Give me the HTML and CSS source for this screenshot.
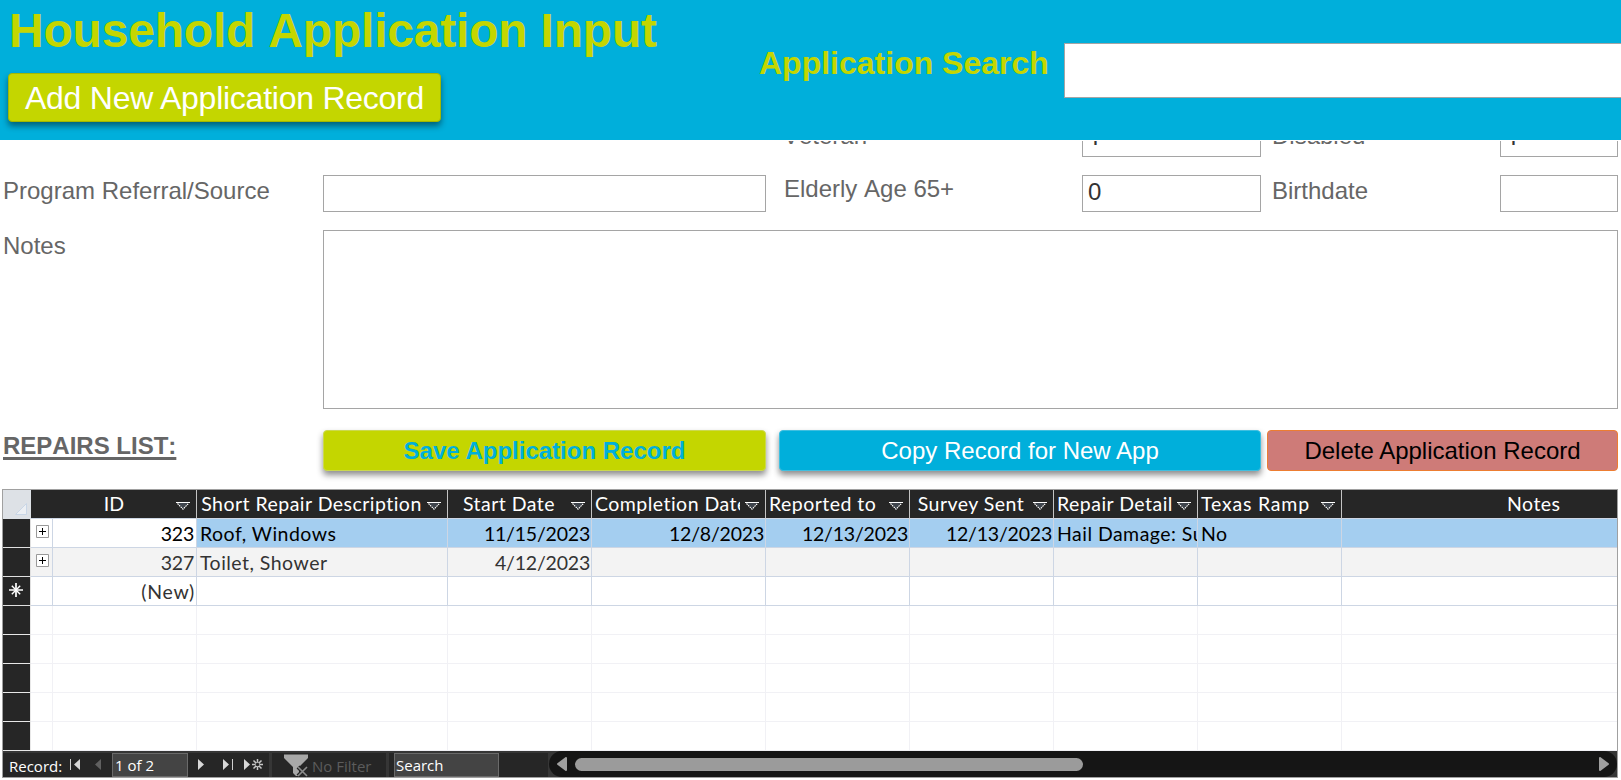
FILE: index.html
```html
<!DOCTYPE html>
<html lang="en">
<head>
<meta charset="utf-8">
<title>Household Application Input</title>
<link rel="stylesheet" href="styles.css">
</head>
<body>
<svg class="defs" width="0" height="0">
  <symbol id="drop" viewBox="0 0 14 8"><path d="M2 1L7 7L12 1Z" fill="#3f454d"/><path d="M0 .5H14" stroke="#fff"/><path d="M1.5 1.5L7 7.2L12.5 1.5" fill="none" stroke="#fff" stroke-width="1.1" stroke-dasharray="1.6 .7"/></symbol>
  <symbol id="plus" viewBox="0 0 13 13"><path d="M.5 .5H12.5V12.5H.5Z" fill="#fff" stroke="#999"/><path d="M3 6.5H10M6.5 3V10" stroke="#000"/></symbol>
</svg>
<header class="banner">
  <div class="banner-left">
    <h1>Household Application Input</h1>
    <button class="btn add"><span>Add New Application Record</span></button>
  </div>
  <div class="search-label">Application Search</div>
  <div class="search-box"></div>
</header>
<main>
  <section class="form">
    <div class="row">
      <span></span><span></span>
      <label class="mid">Veteran</label><div class="field flag">1</div>
      <label class="far">Disabled</label><div class="field flag">1</div>
    </div>
    <div class="row">
      <label>Program Referral/Source</label><div class="field"></div>
      <label class="mid raised">Elderly Age 65+</label><div class="field">0</div>
      <label class="far">Birthdate</label><div class="field"></div>
    </div>
    <div class="row notes">
      <label>Notes</label><div class="field wide"></div>
    </div>
  </section>
  <section class="actions">
    <h2>REPAIRS LIST:</h2>
    <button class="btn save"><span>Save Application Record</span></button>
    <button class="btn copy"><span>Copy Record for New App</span></button>
    <button class="btn delete"><span>Delete Application Record</span></button>
  </section>
  <section class="sheet">
    <div class="grid head">
      <div class="corner"><svg width="12" height="12" viewBox="0 0 12 12"><path d="M11.5 .5V11.5H.5Z" fill="#eceff3" stroke="#c9d6e6"/></svg></div>
      <div></div>
      <div><span class="tight">ID</span><svg><use href="#drop"/></svg></div>
      <div><span>Short Repair Description</span><svg><use href="#drop"/></svg></div>
      <div><span>Start Date</span><svg><use href="#drop"/></svg></div>
      <div><span>Completion Date</span><svg><use href="#drop"/></svg></div>
      <div><span class="left">Reported to</span><svg><use href="#drop"/></svg></div>
      <div><span>Survey Sent</span><svg><use href="#drop"/></svg></div>
      <div><span>Repair Details</span><svg><use href="#drop"/></svg></div>
      <div><span class="left loose">Texas Ramp</span><svg><use href="#drop"/></svg></div>
      <div class="last"><span>Notes</span></div>
    </div>
    <div class="grid data current">
      <div class="sel"></div><div class="exp"><svg><use href="#plus"/></svg></div>
      <div class="num id">323</div><div>Roof, Windows</div><div class="num">11/15/2023</div><div class="num">12/8/2023</div><div class="num">12/13/2023</div><div class="num">12/13/2023</div><div>Hail Damage: Su</div><div>No</div><div></div>
    </div>
    <div class="grid data alt">
      <div class="sel"></div><div class="exp"><svg><use href="#plus"/></svg></div>
      <div class="num id">327</div><div>Toilet, Shower</div><div class="num">4/12/2023</div><div></div><div></div><div></div><div></div><div></div><div></div>
    </div>
    <div class="grid data">
      <div class="sel"><svg width="14" height="14" viewBox="0 0 14 14"><path d="M7 0V14M0 7H14" stroke="#fff" stroke-width="1.7"/><path d="M2.8 2.8L11.2 11.2M11.2 2.8L2.8 11.2" stroke="#fff" stroke-width="1.4"/></svg></div><div></div>
      <div class="num new">(New)</div><div></div><div></div><div></div><div></div><div></div><div></div><div></div><div></div>
    </div>
    <div class="grid data empty"><div class="sel"></div><div></div><div></div><div></div><div></div><div></div><div></div><div></div><div></div><div></div><div></div></div>
    <div class="grid data empty"><div class="sel"></div><div></div><div></div><div></div><div></div><div></div><div></div><div></div><div></div><div></div><div></div></div>
    <div class="grid data empty"><div class="sel"></div><div></div><div></div><div></div><div></div><div></div><div></div><div></div><div></div><div></div><div></div></div>
    <div class="grid data empty"><div class="sel"></div><div></div><div></div><div></div><div></div><div></div><div></div><div></div><div></div><div></div><div></div></div>
    <div class="grid data empty"><div class="sel"></div><div></div><div></div><div></div><div></div><div></div><div></div><div></div><div></div><div></div><div></div></div>
    <div class="navbar">
      <div class="panel record">
        <span class="rec">Record:</span>
        <svg class="prev" width="43" height="24" viewBox="0 0 43 24"><path d="M1.5 6V17" stroke="#d0d0d0"/><path d="M11 6V17L5 11.5Z" fill="#d8d8d8"/><path d="M32 6V17L26 11.5Z" fill="#606060"/></svg>
        <div class="box pos">1 of 2</div>
        <svg width="81" height="24" viewBox="0 0 81 24"><path d="M10 6V17L16 11.5ZM35 6V17L41 11.5ZM56 6V17L62 11.5Z" fill="#d8d8d8"/><path d="M44.5 6V17" stroke="#d0d0d0"/><path d="M69.5 6V17M64 11.5H75M65.5 7.5L73.5 15.5M73.5 7.5L65.5 15.5" stroke="#c8c8c8" stroke-width="1.5"/><circle cx="69.5" cy="11.5" r="1.8" fill="#262626"/></svg>
      </div>
      <div class="panel filter">
        <svg width="26" height="24" viewBox="0 0 26 24"><path d="M0 1.5H24V5L15 14V23H12L9 20V14L0 5Z" fill="#a8a8a8"/><path d="M14 14L23 23M23 14L14 23" stroke="#262626" stroke-width="4"/><path d="M14 14L23 23M23 14L14 23" stroke="#8c8c8c" stroke-width="1.6"/></svg>
        <span>No Filter</span>
      </div>
      <div class="panel find"><div class="box">Search</div></div>
      <div class="scroll">
        <svg width="10" height="14" viewBox="0 0 10 14"><path d="M9 1V13L1 7Z" fill="#a0a0a0" stroke="#a0a0a0" stroke-width="2" stroke-linejoin="round"/></svg>
        <div class="thumb"></div>
        <svg class="right" width="10" height="14" viewBox="0 0 10 14"><path d="M1 1V13L9 7Z" fill="#a0a0a0" stroke="#a0a0a0" stroke-width="2" stroke-linejoin="round"/></svg>
      </div>
    </div>
  </section>
</main>
</body>
</html>
```
FILE: styles.css
```css
* { box-sizing: border-box; }
body {
  margin: 0;
  width: 1621px;
  height: 780px;
  overflow: hidden;
  background: #fff;
  font-family: "Liberation Sans", Arial, sans-serif;
  font-size: 24px;
  line-height: 28px;
  font-kerning: none;
}
.defs { display: block; height: 0; }
h1, h2 { margin: 0; }

.banner {
  display: flex;
  height: 141px;
  background: #00afdb;
  border-bottom: 1px solid #fff;
  color: #c4d600;
}
.banner-left { width: 759px; padding-left: 8px; }
h1 {
  font-size: 48px;
  line-height: 54px;
  height: 73px;
  padding: 4px 0 0 1px;
  letter-spacing: -0.2px;
  white-space: nowrap;
}
.search-label {
  width: 305px;
  padding-top: 45px;
  font-size: 32px;
  line-height: 36px;
  font-weight: bold;
  white-space: nowrap;
}
.search-box {
  flex: 1;
  height: 55px;
  margin-top: 43px;
  background: #fff;
  border: 1px solid #a5a5a5;
  border-right: 0;
}
.btn {
  display: block;
  border: 1px solid;
  border-radius: 4px;
  padding: 0;
  font-family: inherit;
  font-size: 24px;
  line-height: 28px;
  text-align: center;
  white-space: nowrap;
  box-shadow: 0 4px 6px rgba(0, 0, 0, 0.45);
}
.add {
  width: 433px;
  height: 49px;
  background: #c4d600;
  border-color: #a3b800;
  color: #fff;
  font-size: 32px;
  line-height: 36px;
  letter-spacing: -0.25px;
}

.form {
  display: flex;
  flex-direction: column;
  gap: 18px;
  height: 289px;
  padding-left: 3px;
  overflow: hidden;
}
.row {
  display: grid;
  grid-template-columns: 320px 443px 316px 179px 239px 118px;
  height: 37px;
  flex-shrink: 0;
  color: #666;
}
.row:first-child { margin-top: -21px; }
.row label { padding-top: 2px; }
.row .mid { padding-left: 17px; }
.row .far { padding-left: 11px; }
.row .raised { padding: 0 0 0 18px; }
.field {
  border: 1px solid #a5a5a5;
  padding: 2px 5px;
  color: #333;
  background: #fff;
}
.flag { font-family: Roboto, sans-serif; }
.notes { height: 179px; }
.wide { grid-column: 2 / -1; }

.actions {
  display: grid;
  grid-template-columns: 320px 443px 13px 482px 6px 351px;
  height: 59px;
  padding-left: 3px;
}
.actions .btn { height: 41px; }
h2 {
  font-size: 24px;
  line-height: 28px;
  padding-top: 2px;
  color: #666;
  text-decoration: underline;
  text-decoration-thickness: 3px;
  text-underline-offset: 3px;
  text-decoration-skip-ink: none;
}
.save { grid-column: 2; background: #c4d600; border-color: #cbd94e; color: #00afdb; font-weight: bold; padding-top: 1px; }
.copy { grid-column: 4; background: #00afdb; border-color: #3fbfe0; color: #fff; }
.delete { grid-column: 6; background: #ce7b78; border-color: #ed7d31; color: #000; box-shadow: none; }

.sheet {
  width: 1616px;
  height: 289px;
  margin-left: 2px;
  border: 1px solid #a0a0a0;
  font-family: Lato, sans-serif;
  font-size: 19.5px;
  line-height: 28px;
  font-kerning: auto;
  font-variant-ligatures: none;
  letter-spacing: 0.47px;
}
.grid {
  display: grid;
  grid-template-columns: 28px 22px 144px 251px 144px 174px 144px 144px 144px 144px 275px;
  height: 29px;
}
.grid > div {
  border-right: 1px solid #cdd6e4;
  border-bottom: 1px solid #cdd6e4;
  overflow: hidden;
  white-space: nowrap;
}
.grid > div:last-child { border-right: 0; }
.head > div {
  display: flex;
  position: relative;
  padding: 0 24px 0 3px;
  background: #262626;
  border-right-color: #c4c4c4;
  color: #fff;
}
.head span { margin: 0 auto; flex-shrink: 0; }
.head .left { margin-left: 0; }
.head .loose { letter-spacing: 0.8px; }
.head .tight { letter-spacing: 0; }
.head svg {
  position: absolute;
  right: 0;
  top: 0;
  width: 25px;
  height: 28px;
  padding: 12px 6px 8px 5px;
  background: #262626;
}
.head .corner { background: #dde1e6; border-color: #dde1e6; }
.head .corner svg { width: 12px; height: 12px; top: 13px; right: 3px; padding: 0; background: none; }
.head .last { padding: 0 0 0 165px; }
.head .last span { margin: 0; }
.data { line-height: 29px; }
.data > div { padding: 0 1px 0 3px; color: #333; }
.data > .num { text-align: right; letter-spacing: -0.2px; }
.data > .id { padding-right: 2px; }
.data > .new { letter-spacing: 0.7px; }
.data > .sel { background: #262626; padding: 6px 0 0 6px; border-color: #e0e0e0; line-height: 0; }
.exp svg { display: block; width: 13px; height: 13px; margin: 6px 0 0 2px; }
.current > div { background: #a4cef0; color: #000; }
.current > .exp, .current > .id { background: #fff; }
.alt > div { background: #f3f3f3; }
.empty > div { border-color: #f1f1f5; }
.empty > .sel { border-color: #e8e8e8; }

.navbar {
  display: flex;
  height: 26px;
  background: #363636;
  font-family: "Open Sans", sans-serif;
  font-size: 15px;
  line-height: 22px;
  letter-spacing: 0;
  color: #fff;
}
.panel { display: flex; margin-top: 2px; height: 24px; background: #262626; white-space: nowrap; }
.record { width: 266px; margin-right: 3px; }
.rec { width: 66px; padding: 2px 0 0 6px; }
.box { height: 24px; background: #444; border: 1px solid #6a6a6a; padding-left: 2px; line-height: 22px; }
.pos { width: 76px; }
.filter { width: 114px; margin-right: 3px; padding-left: 12px; color: #5c5c5c; }
.filter span { padding: 2px 0 0 2px; }
.find { width: 159px; padding-left: 5px; }
.find .box { width: 105px; padding-left: 1px; }
.scroll {
  display: flex;
  align-items: center;
  flex: 1;
  margin-left: 1px;
  padding: 0 8px;
  background: #151515;
  border-radius: 13px;
}
.thumb { width: 508px; height: 13px; margin-left: 8px; border-radius: 7px; background: #9b9b9b; }
.right { margin-left: auto; }
```
